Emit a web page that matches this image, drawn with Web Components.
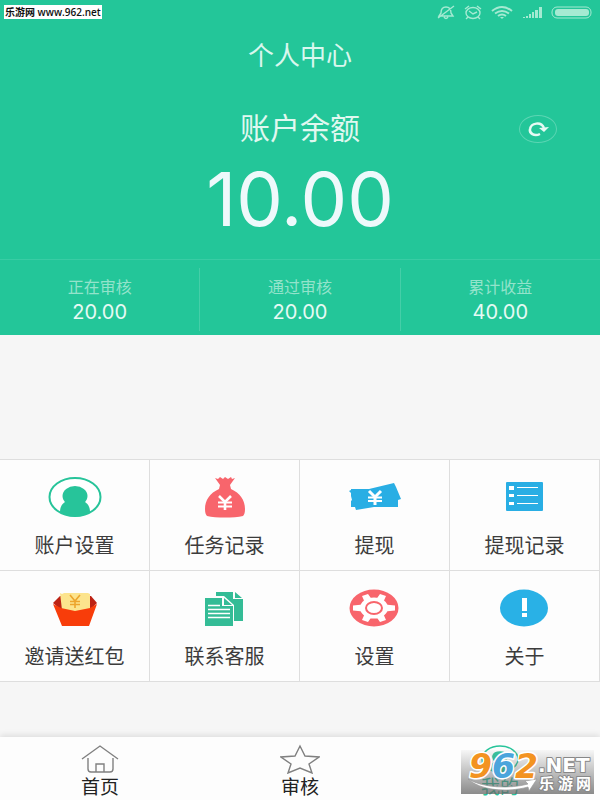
<!DOCTYPE html>
<html lang="zh-CN">
<head>
<meta charset="utf-8">
<meta name="viewport" content="width=device-width, initial-scale=1">
<title>个人中心</title>
<style>
  html, body {
    margin: 0;
  }

  body {
    font-family: Roboto, "Noto Sans CJK SC", sans-serif;
    background: #f6f6f6;
  }
</style>
</head>
<body>
<profile-app></profile-app>

<script>
const icons = {
  user: `<svg width="54" height="42" viewBox="0 0 54 42">
    <ellipse cx="27" cy="21" rx="25.5" ry="19" fill="#fff" stroke="#27c49a" stroke-width="2"/>
    <ellipse cx="27" cy="20" rx="12.5" ry="10" fill="#27c49a"/>
    <path fill="#27c49a" d="M12 36c0-6 3-10 8-11h14c5 1 8 5 8 11-8 6-22 6-30 0z"/></svg>`,
  bag: `<svg width="54" height="42" viewBox="0 0 54 42">
    <path fill="#f8656c" d="M17 2l3 1 2-2 3 2 2-2 3 2 3-2 1 2 3-1-5 7 1 4c9 4 14 11 14 20 0 4-1 6-2 7-9 2-27 2-36 0-1-1-2-3-2-7 0-9 5-16 14-20l1-4z"/>
    <path fill="none" stroke="#fff" stroke-width="2.6" d="M21 20l6 6 6-6M27 26v8"/>
    <path fill="none" stroke="#fff" stroke-width="1.8" d="M20 26.5h14M20 30.5h14"/></svg>`,
  cash: `<svg width="54" height="42" viewBox="0 0 54 42">
    <path fill="#29aee4" d="M3 13h18l25-6 2 4 5 12-3 1v7H26L8 34l-1-3H3v-6l1-1-1-4v-3l-2-2 2-1z"/>
    <path fill="none" stroke="#fff" stroke-width="3" d="M21 15l6 6 6-6M27 21v8"/>
    <path fill="none" stroke="#fff" stroke-width="2" d="M20 21.5h14M20 25h14"/></svg>`,
  list: `<svg width="54" height="42" viewBox="0 0 54 42">
    <rect x="8" y="6" width="37" height="29" rx="1" fill="#29aee4"/>
    <path fill="#fff" d="M11 10h5v4h-5zM11 18h5v3h-5zM11 26h5v3h-5zM19 11h21v1H19zM19 19h21v1H19zM19 27h21v1H19z"/></svg>`,
  packet: `<svg width="54" height="42" viewBox="0 0 54 42">
    <path fill="#bd2314" d="M12 9h31l6 7-7 7H13l-8-7z"/>
    <path fill="#fce48d" d="M12 6l2 1 2-1h24l2 1v16l-15 4-13-4z"/>
    <path fill="none" stroke="#eda52c" stroke-width="1.6" d="M22 8l5 6 5-6M27 14v7M22 14.5h10M22 17.5h10"/>
    <path fill="#f83d0a" d="M5 17l8 4 14 3 15-3 7-4-8 22H14z"/></svg>`,
  files: `<svg width="54" height="42" viewBox="0 0 54 42">
    <path fill="#34bc96" d="M18 5h17v7h10v22h-9V18L26 9h-8z"/>
    <path fill="#34bc96" d="M37 5l7 6h-7zM7 11h17v8h11v20H7z"/>
    <path fill="#34bc96" d="M26 11l8 7h-8z"/>
    <path stroke="#fff" stroke-width="1.3" d="M10 18.5h12M10 22.5h22M10 26.5h22M10 30.5h22"/></svg>`,
  gear: `<svg width="54" height="42" viewBox="0 0 54 42">
    <ellipse cx="26" cy="21" rx="24.5" ry="18.5" fill="#f8656c"/>
    <ellipse cx="26" cy="21" rx="14" ry="10.5" fill="#fff"/>
    <path fill="#fff" d="M5 18.5l10-1v7l-10-1zM47 18.5l-10-1v7l10-1zM14 9l6-2 5 7-7 4zM38 9l-6-2-5 7 7 4zM14 33l6 2 5-7-7-4zM38 33l-6 2-5-7 7-4z"/>
    <ellipse cx="26" cy="21" rx="8" ry="6" fill="#fff" stroke="#f8656c" stroke-width="2"/></svg>`,
  about: `<svg width="54" height="42" viewBox="0 0 54 42">
    <ellipse cx="26" cy="21" rx="24" ry="18.5" fill="#29b1e6"/>
    <path fill="#fff" d="M24 11h5v13h-5zM24 26h5v4h-5z"/></svg>`,
  home: `<svg width="40" height="30" viewBox="0 0 40 30" fill="none" stroke="#808080" stroke-width="1.4">
    <path d="M2 15L20 2l18 13M8 14v11q0 3 3 3h19q3 0 3-3V14M16 28v-8h8v8"/></svg>`,
  star: `<svg width="40" height="30" viewBox="0 0 40 30" fill="none" stroke="#808080" stroke-width="1.4">
    <path d="M20 2l5 10 14 1-10 7 3 9-12-5-12 5 3-9-10-7 14-1z"/></svg>`,
  me: `<svg width="40" height="30" viewBox="0 0 40 30" fill="none" stroke="#27c49a" stroke-width="1.5">
    <ellipse cx="20" cy="15" rx="18" ry="13"/>
    <path fill="#27c49a" d="M11 25c0-4 2-6 5-7-5-4-4-10 4-10s9 6 4 10c3 1 5 3 5 7-5 3-13 3-18 0z"/></svg>`
};

class StatusBar extends HTMLElement {
  constructor() {
    super();
    this.attachShadow({ mode: 'open' }).innerHTML = `
    <style>
      :host { display: flex; justify-content: flex-end; height: 24px; padding: 0 7px; }
    </style>
    <svg width="158" height="24" viewBox="0 0 158 24" fill="none" stroke="#a5ead2" stroke-width="1.4" aria-hidden="true">
      <path d="M4 16h14l-2-3c0-4-1-6-5-6s-5 2-5 6zM9 17q2 3 4 0M3 18L19 6"/>
      <ellipse cx="38" cy="13" rx="7" ry="5.5"/>
      <path d="M34 11l4 3 4-2M30 9l4-3M42 6l4 3M33 17l-2 2M43 17l2 2"/>
      <path stroke-width="2" d="M57 11q10-8 20 0M60 13.5q7-5 14 0M63 16q4-3 8 0"/>
      <path fill="#a5ead2" stroke="none" d="M65 17h4l-2 2zM88 18v-1h2v1zM91 18v-2h2v2zM94 18v-4h2v4zM97 18v-6h2v6zM100 18v-8h3v8zM104 18V7h3v11z"/>
      <rect x="117" y="7" width="39" height="11" rx="5" stroke-width="1"/>
      <rect x="120" y="9" width="34" height="7" rx="3" fill="#a5ead2" stroke="none"/>
    </svg>
    `;
  }
}
customElements.define('status-bar', StatusBar);

class StatItem extends HTMLElement {
  constructor() {
    super();
    this.attachShadow({ mode: 'open' }).innerHTML = `
    <style>
      :host { display: block; flex: 1; text-align: center; padding-top: 8px; box-sizing: border-box; }
      :host(:not(:last-child)) { border-right: 1px solid #45cea8; }
      .label { font-size: 16px; line-height: 24px; color: #93e3cb; }
      .value { font: 20px/24px Inter, sans-serif; color: #e6faf4; }
    </style>
    <div class="label"><slot name="label"></slot></div>
    <div class="value"><slot></slot></div>
    `;
  }
}
customElements.define('stat-item', StatItem);

class BalancePanel extends HTMLElement {
  constructor() {
    super();
    this.attachShadow({ mode: 'open' }).innerHTML = `
    <style>
      :host { display: block; background: #23c699; color: #eafbf6; text-align: center; }
      h1 { margin: 0; padding-top: 14px; font-size: 26px; line-height: 36px; font-weight: 400; color: #d9f7ee; }
      .row { display: grid; grid-template-columns: 1fr auto 1fr; align-items: center; padding: 31px 43px 0; }
      h2 { grid-column: 2; margin: 0; font-size: 30px; line-height: 48px; font-weight: 400; color: #e0f8f0; }
      button { justify-self: end; width: 38px; height: 28px; padding: 0; border: 1px solid #5bd5b3; border-radius: 50%; background: none; }
      svg { display: block; margin: auto; }
      .amount { font: 74px/80px Inter, sans-serif; padding: 6px 0 20px; color: #eef9fb; }
      .stats { display: flex; height: 76px; box-sizing: border-box; padding: 8px 0 4px; border-top: 1px solid #39cca4; }
    </style>
    <status-bar></status-bar>
    <h1>个人中心</h1>
    <div class="row">
      <h2>账户余额</h2>
      <button type="button" aria-label="刷新">
        <svg width="22" height="18" viewBox="0 0 22 18" fill="none" stroke="#e6faf4" stroke-width="2.5">
          <path d="M13 14C7 17 2 13 3 9c1-6 11-8 14-1"/>
          <path fill="#e6faf4" stroke="none" d="M12 8l10-1-5 5z"/>
        </svg>
      </button>
    </div>
    <div class="amount">10.00</div>
    <div class="stats">
      <stat-item><span slot="label">正在审核</span>20.00</stat-item>
      <stat-item><span slot="label">通过审核</span>20.00</stat-item>
      <stat-item><span slot="label">累计收益</span>40.00</stat-item>
    </div>
    `;
  }
}
customElements.define('balance-panel', BalancePanel);

class MenuItem extends HTMLElement {
  connectedCallback() {
    this.attachShadow({ mode: 'open' }).innerHTML = `
    <style>
      :host { display: block; background: #fdfdfd; border: solid #dedede; border-width: 0 1px 1px 0; }
      a { display: flex; flex-direction: column; align-items: center; padding: 16px 0 10px; color: #3c3c3c; text-decoration: none; font-size: 20px; line-height: 28px; }
      svg { display: block; margin-bottom: 14px; }
    </style>
    <a href="#${this.getAttribute('icon')}">${icons[this.getAttribute('icon')]}<span><slot></slot></span></a>
    `;
  }
}
customElements.define('menu-item', MenuItem);

class MenuGrid extends HTMLElement {
  constructor() {
    super();
    this.attachShadow({ mode: 'open' }).innerHTML = `
    <style>
      :host { display: grid; grid-template-columns: repeat(4, 1fr); border-top: 1px solid #dedede; }
    </style>
    <slot></slot>
    `;
  }
}
customElements.define('menu-grid', MenuGrid);

class TabItem extends HTMLElement {
  connectedCallback() {
    this.attachShadow({ mode: 'open' }).innerHTML = `
    <style>
      :host { display: block; flex: 1; color: #222; }
      :host([active]) { color: #27c49a; }
      a { display: flex; flex-direction: column; align-items: center; padding-top: 7px; color: inherit; text-decoration: none; font-size: 19px; line-height: 28px; }
      svg { display: block; }
    </style>
    <a href="#${this.getAttribute('icon')}">${icons[this.getAttribute('icon')]}<span><slot></slot></span></a>
    `;
  }
}
customElements.define('tab-item', TabItem);

class SiteTag extends HTMLElement {
  constructor() {
    super();
    this.attachShadow({ mode: 'open' }).innerHTML = `
    <style>
      :host { position: absolute; top: 5px; left: 4px; padding: 0 1px; background: #fff; color: #111; font: 600 10px/14px "Open Sans", "Noto Sans CJK SC", sans-serif; white-space: nowrap; }
    </style>
    <slot></slot>
    `;
  }
}
customElements.define('site-tag', SiteTag);

// site logo laid over the right end of the tab bar
class SiteLogo extends HTMLElement {
  constructor() {
    super();
    this.attachShadow({ mode: 'open' }).innerHTML = `
    <style>
      :host { position: absolute; right: 6px; bottom: 6px; width: 133px; height: 44px; background: linear-gradient(rgba(190, 190, 190, .1), rgba(100, 100, 100, .75)); }
      svg { display: block; overflow: visible; }
      text { paint-order: stroke; stroke: #fff; stroke-linejoin: round; }
      .num { font: italic bold 33px "DejaVu Sans", sans-serif; stroke-width: 3px; }
      .net { font: bold 20px "DejaVu Sans", sans-serif; fill: #fff; stroke: #888; stroke-width: 2px; }
      .cn { font: bold 15px "Noto Sans CJK SC", sans-serif; fill: #fff; stroke: #888; stroke-width: 2px; }
    </style>
    <svg width="133" height="44" viewBox="0 0 133 44">
      <path fill="#fff" stroke="#999" stroke-width=".7" d="M7 29c15 9 42 10 60 5l-3-3 12-2-8 12-1-4c-22 6-48 3-60-8z"/>
      <text class="num" x="8" y="28"><tspan fill="#f39321">9</tspan><tspan fill="#4ba5dc">6</tspan><tspan fill="#f39321">2</tspan></text>
      <text class="net" x="77" y="22">.NET</text>
      <text class="cn" y="39"><tspan x="78">乐</tspan><tspan x="97">游</tspan><tspan x="115">网</tspan></text>
    </svg>
    `;
  }
}
customElements.define('site-logo', SiteLogo);

class ProfileApp extends HTMLElement {
  constructor() {
    super();
    this.attachShadow({ mode: 'open' }).innerHTML = `
    <style>
      :host { display: flex; flex-direction: column; position: relative; min-height: 100vh; }
      main { flex: 1; padding: 124px 0 48px; }
      nav { display: flex; position: relative; height: 63px; background: #fdfdfd; box-shadow: 0 -2px 6px rgba(0, 0, 0, .1); }
    </style>
    <balance-panel></balance-panel>
    <main>
      <menu-grid>
        <menu-item icon="user">账户设置</menu-item>
        <menu-item icon="bag">任务记录</menu-item>
        <menu-item icon="cash">提现</menu-item>
        <menu-item icon="list">提现记录</menu-item>
        <menu-item icon="packet">邀请送红包</menu-item>
        <menu-item icon="files">联系客服</menu-item>
        <menu-item icon="gear">设置</menu-item>
        <menu-item icon="about">关于</menu-item>
      </menu-grid>
    </main>
    <nav>
      <tab-item icon="home">首页</tab-item>
      <tab-item icon="star">审核</tab-item>
      <tab-item icon="me" active>我的</tab-item>
      <site-logo></site-logo>
    </nav>
    <site-tag>乐游网 www.962.net</site-tag>
    `;
  }
}
customElements.define('profile-app', ProfileApp);
</script>
</body>
</html>
